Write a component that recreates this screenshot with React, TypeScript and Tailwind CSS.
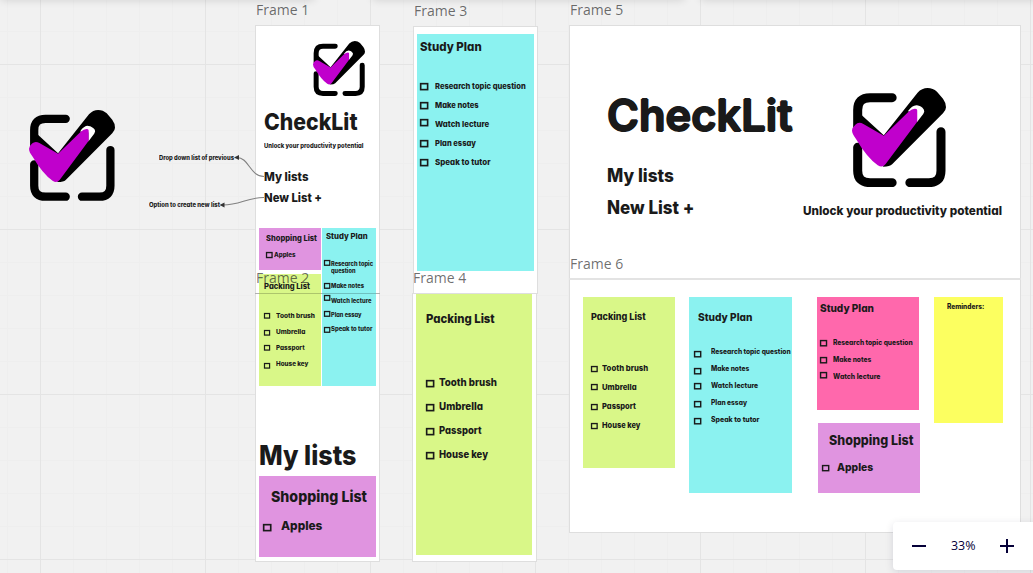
import { useLayoutEffect, useRef, type ReactNode } from "react";

const board =
  "font-['Inter',sans-serif] font-extrabold text-[#1a1a1a] [font-feature-settings:'cv11','ss03']";
const display =
  "font-['Inter',sans-serif] font-semibold text-[#1a1a1a] [font-feature-settings:'cv11','ss03'] [text-shadow:1px_0_#1a1a1a,-1px_0_#1a1a1a,0_1px_#1a1a1a,0_-1px_#1a1a1a]";
const caption = "font-['Open_Sans','Noto_Sans',sans-serif]";

// A line of text, stretched to the width of its text box.
function Text({ children, width, className }: { children: string; width: number; className: string }) {
  const ref = useRef<HTMLSpanElement>(null);
  useLayoutEffect(() => {
    const el = ref.current;
    if (el) {
      el.style.transform = "none";
      el.style.transform = `scaleX(${width / el.getBoundingClientRect().width})`;
    }
  }, [children, width]);
  return (
    <span ref={ref} className={`block w-max shrink-0 origin-left whitespace-nowrap ${className}`}>
      {children}
    </span>
  );
}

function Logo({ className }: { className: string }) {
  return (
    <svg className={`shrink-0 ${className}`} viewBox="36 38 281 298" preserveAspectRatio="none">
      <g fill="none" stroke="#000" strokeWidth="27" strokeLinecap="round">
        <path d="M156 67H90Q53 67 53 104V155" />
        <path d="M53 216V286Q53 322 90 322H156" />
        <path d="M302 169V286Q302 322 266 322H209" />
      </g>
      <path
        d="M53 106L67 121L131 180L232 52Q245 38 262 38Q278 38 290 49L308 70Q317 82 317 96Q317 105 308 114L156 267Q149 274 130 274L68 212L53 180Z"
        fill="#000"
      />
      <path d="M203 108Q216 89 230 90Q243 91 251 103Q254 108 249 116L230 141V112Z" fill="#fff" />
      <path
        d="M46 148Q56 138 70 146L131 181L205 109Q219 97 229 101Q232 104 231 110V139L136 267Q127 279 113 270Q80 246 48 191Q36 176 36 165Q36 157 46 148Z"
        fill="#c000cc"
      />
    </svg>
  );
}

function Checkbox({ className }: { className: string }) {
  return (
    <svg className={`shrink-0 overflow-visible ${className}`} viewBox="0 0 16 14" preserveAspectRatio="none">
      <rect x="1.3" y="1.3" width="13.6" height="11.6" fill="none" stroke="#1a1a1a" strokeWidth="3.2" />
    </svg>
  );
}

type Row = { lines: string[]; widths: number[]; nudge?: string; className?: string };

type NoteProps = {
  className: string;
  title: string;
  titleWidth: number;
  titleClass: string;
  listClass?: string;
  rowClass?: string;
  checkClass?: string;
  textClass?: string;
  rows?: Row[];
};

const row = (text: string, width: number, nudge = ""): Row => ({
  lines: [text],
  widths: [width],
  nudge,
});

function Note(p: NoteProps) {
  return (
    <article className={`flex shrink-0 flex-col items-start ${p.className}`}>
      <Text width={p.titleWidth} className={`${board} ${p.titleClass}`}>
        {p.title}
      </Text>
      {p.rows && (
        <ul className={`flex flex-col ${p.listClass}`}>
          {p.rows.map((r) => (
            <li key={r.lines[0]} className={`flex ${r.className ?? `items-center ${p.rowClass}`}`}>
              <Checkbox className={`${p.checkClass} ${r.nudge ?? ""}`} />
              <div>
                {r.lines.map((line, i) => (
                  <Text key={line} width={r.widths[i]} className={`${board} ${p.textClass}`}>
                    {line}
                  </Text>
                ))}
              </div>
            </li>
          ))}
        </ul>
      )}
    </article>
  );
}

function Frame({
  name,
  className,
  bodyClass,
  children,
}: {
  name: string;
  className: string;
  bodyClass: string;
  children?: ReactNode;
}) {
  return (
    <section className={`absolute flex flex-col ${className}`}>
      <header className="relative z-10 h-[25px] shrink-0 pl-[0.500px]">
        <Text width={53.2} className={`${caption} text-[14.2px] leading-[20px] text-[#1a1a1a]/65`}>
          {name}
        </Text>
      </header>
      <div className={`flex flex-1 border border-[#dedede] bg-white ${bodyClass}`}>{children}</div>
    </section>
  );
}

export default function App() {
  return (
    <main className="relative h-[573px] w-[1033px] overflow-hidden bg-[#f1f1f1] bg-[linear-gradient(to_right,#e4e4e4_1px,transparent_1px),linear-gradient(to_bottom,#e4e4e4_1px,transparent_1px),linear-gradient(to_right,#eeeeee_1px,transparent_1px),linear-gradient(to_bottom,#eeeeee_1px,transparent_1px)] bg-[size:165px_165px,165px_165px,33px_33px,33px_33px] bg-[position:40px_64px,40px_64px,7px_31px,7px_31px]">
      <Frame name="Frame 1" className="left-[255px] top-0 h-[294px] w-[125px]" bodyClass="flex-col pl-2 pt-[15px]">
        <Logo className="ml-[49px] h-[55px] w-[52px]" />
        <Text width={93.5} className={`${board} mt-[13px] text-[23px] leading-[26px]`}>CheckLit</Text>
        <Text width={99.5} className={`${board} mt-[7px] text-[6.2px] leading-[8px]`}>
          Unlock your productivity potential
        </Text>
        <Text width={44.5} className={`${board} mt-[19px] text-[12.4px] leading-[16px]`}>My lists</Text>
        <Text width={58} className={`${board} mt-[5px] text-[12.4px] leading-[16px]`}>New List +</Text>
      </Frame>

      <Frame name="Frame 2" className="left-[255px] top-[268px] h-[294px] w-[125px]" bodyClass="flex-col pl-[3px] pt-[145px]">
        <Text width={97.5} className={`${board} text-[27.500px] leading-[32px]`}>My lists</Text>
        <Note
          className="mt-[5px] h-[80.5px] w-[117px] bg-[#e094e0] pl-[4.300px] pt-[10.500px]"
          title="Shopping List"
          titleWidth={96}
          titleClass="ml-2 text-[15px] leading-[20px]"
          listClass="mt-[11px]"
          rowClass="h-4 gap-[9.400px]"
          checkClass="h-[7.200px] w-[8.300px]"
          textClass="text-[12.4px] leading-[16px]"
          rows={[row("Apples", 41.4, "mt-1")]}
        />
      </Frame>

      <div className="absolute left-[259px] top-[227.5px] flex gap-[0.800px]">
        <div className="flex flex-col gap-1">
          <Note
            className="h-[42.5px] w-[62px] bg-[#e094e0] pl-[6.600px] pt-[5.700px]"
            title="Shopping List"
            titleWidth={51}
            titleClass="text-[7.8px] leading-[10px]"
            listClass="mt-[6.500px]"
            rowClass="h-[10px] gap-[1.600px]"
            checkClass="h-[6px] w-[6.500px]"
            textClass="text-[6.3px] leading-[10px]"
            rows={[row("Apples", 21.6)]}
          />
          <Note
            className="h-[112px] w-[62px] bg-[#d9f788] pl-[5.300px] pt-[6.700px]"
            title="Packing List"
            titleWidth={46}
            titleClass="text-[7.8px] leading-[10px]"
            listClass="mt-[17.300px]"
            rowClass="h-4 gap-[5.700px]"
            checkClass="h-[5.500px] w-[6px]"
            textClass="text-[6.2px] leading-[16px]"
            rows={[
              row("Tooth brush", 39),
              row("Umbrella", 29.3, "mt-[2px]"),
              row("Passport", 28.6),
              row("House key", 32.4, "mt-[4px]"),
            ]}
          />
        </div>
        <Note
          className="h-[158.500px] w-[54px] bg-[#8bf2f0] pl-[2.500px] pt-[4.600px]"
          title="Study Plan"
          titleWidth={41.6}
          titleClass="ml-[1.500px] text-[7.4px] leading-[10px]"
          listClass="mt-[18.200px]"
          rowClass="h-[14.400px] gap-[0.800px]"
          checkClass="h-[5.700px] w-[6.200px]"
          textClass="text-[5.7px] leading-[7px]"
          rows={[
            {
              lines: ["Research topic", "question"],
              widths: [42, 24.5],
              className: "h-[18.300px] items-start gap-[0.800px]",
            },
            row("Make notes", 33),
            row("Watch lecture", 40.4, "-mt-[3.800px]"),
            row("Plan essay", 30.6, "-mt-[0.800px]"),
            row("Speak to tutor", 41.5, "mt-[1.400px]"),
          ]}
        />
      </div>
      <hr className="absolute left-[255px] top-[293px] w-[125px] border-t border-black/20" />

      <Frame name="Frame 3" className="left-[413px] top-px h-[293px] w-[124.500px]" bodyClass="items-start pl-[2.500px] pt-[7px]">
        <Note
          className="h-[237px] w-[117px] bg-[#8bf2f0] pl-[3.600px] pt-[4.600px]"
          title="Study Plan"
          titleWidth={61.7}
          titleClass="text-[12px] leading-[16px]"
          listClass="mt-[21.500px]"
          rowClass="h-[19.200px] gap-[6.400px]"
          checkClass="h-[7.200px] w-[8.200px]"
          textClass="text-[8px] leading-[14px]"
          rows={[
            row("Research topic question", 90.7, "mt-[1px]"),
            row("Make notes", 43.7, "mt-[1px]"),
            row("Watch lecture", 54.2, "-mt-[3px]"),
            row("Plan essay", 41, "mt-[1px]"),
            row("Speak to tutor", 55.5, "mt-[1px]"),
          ]}
        />
      </Frame>

      <Frame name="Frame 4" className="left-[412px] top-[268px] h-[294px] w-[125px]" bodyClass="items-start pl-[3.400px]">
        <Note
          className="h-[261px] w-[115.600px] bg-[#d9f788] pl-[9.600px] pt-[16.600px]"
          title="Packing List"
          titleWidth={68.7}
          titleClass="text-[12px] leading-[16px]"
          listClass="mt-[44.200px]"
          rowClass="h-6 gap-[4.800px]"
          checkClass="h-[7.200px] w-[8.200px]"
          textClass="text-[10.5px] leading-[16px]"
          rows={[
            row("Tooth brush", 58, "mt-[2px]"),
            row("Umbrella", 44, "mt-[1px]"),
            row("Passport", 42.5, "mt-[1px]"),
            row("House key", 49, "mt-[2px]"),
          ]}
        />
      </Frame>

      <Frame name="Frame 5" className="left-[569px] top-0 h-[280px] w-[452px]" bodyClass="items-start pl-[37px]">
        <div className="flex w-[196px] flex-col pt-[63px]">
          <Text width={185.500} className={`${display} text-[43.500px] leading-[52px]`}>CheckLit</Text>
          <Text width={67} className={`${board} mt-[22px] text-[18.2px] leading-[24px]`}>My lists</Text>
          <Text width={87.5} className={`${board} mt-2 text-[18.2px] leading-[24px]`}>New List +</Text>
        </div>
        <div className="flex flex-col pt-[61.700px]">
          <Logo className="ml-[49px] h-[99.300px] w-[94px]" />
          <Text width={199} className={`${board} mt-4 text-[12px] leading-[16px]`}>
            Unlock your productivity potential
          </Text>
        </div>
      </Frame>

      <Frame name="Frame 6" className="left-[569px] top-[254px] h-[279px] w-[452px]" bodyClass="items-start pl-[13.400px] pt-[17px]">
        <Note
          className="mr-[13.800px] h-[171.300px] w-[92px] bg-[#d9f788] pl-[7.600px] pt-[13.800px]"
          title="Packing List"
          titleWidth={54.6}
          titleClass="text-[9.4px] leading-[12px]"
          listClass="mt-[35.800px]"
          rowClass="h-[19px] gap-[4px]"
          checkClass="h-[6px] w-[6.600px]"
          textClass="text-[8.2px] leading-[13px]"
          rows={[
            row("Tooth brush", 46.2, "mt-[2px]"),
            row("Umbrella", 34.6),
            row("Passport", 34, "mt-[1px]"),
            row("House key", 38.4, "mt-[2px]"),
          ]}
        />
        <Note
          className="mr-[25px] h-[196px] w-[102.500px] bg-[#8bf2f0] pl-[5.200px] pt-[15.200px]"
          title="Study Plan"
          titleWidth={54.4}
          titleClass="ml-[3.500px] text-[10.4px] leading-[12px]"
          listClass="mt-[19px]"
          rowClass="h-[17px] gap-[9.100px]"
          checkClass="h-[6.300px] w-[7.200px]"
          textClass="text-[7px] leading-[11px]"
          rows={[
            row("Research topic question", 79.6, "mt-[5px]"),
            row("Make notes", 38.2, "mt-[4px]"),
            row("Watch lecture", 47.2),
            row("Plan essay", 36, "mt-[3px]"),
            row("Speak to tutor", 48.5, "mt-[3px]"),
          ]}
        />
        <div className="mr-[15.200px] flex w-[102.500px] shrink-0 flex-col gap-[13px]">
          <Note
            className="h-[113px] w-[102.500px] bg-[#ff68ac] pl-[3.500px] pt-[6.200px]"
            title="Study Plan"
            titleWidth={54}
            titleClass="text-[10.4px] leading-[12px]"
            listClass="mt-[19px]"
            rowClass="h-[17px] gap-[5.800px]"
            checkClass="h-[6.300px] w-[7px]"
            textClass="text-[7px] leading-[11px]"
            rows={[
              row("Research topic question", 79.6, "mt-[1px]"),
              row("Make notes", 38.2, "mt-[1px]"),
              row("Watch lecture", 47.4, "-mt-[3px]"),
            ]}
          />
          <Note
            className="ml-px h-[70.300px] w-[102.500px] bg-[#e094e0] pl-1 pt-[8.200px]"
            title="Shopping List"
            titleWidth={84.5}
            titleClass="ml-[7px] text-[13.2px] leading-[18px]"
            listClass="mt-[12px]"
            rowClass="h-[14px] gap-[8.500px]"
            checkClass="h-[6.200px] w-[7.200px]"
            textClass="text-[10.8px] leading-[14px]"
            rows={[row("Apples", 36.2)]}
          />
        </div>
        <Note
          className="h-[126px] w-[68.600px] bg-[#fcff60] pl-[12.300px] pt-[4.600px]"
          title="Reminders:"
          titleWidth={37.2}
          titleClass="text-[6.9px] leading-[10px]"
        />
      </Frame>
      <hr className="absolute left-[569px] top-[278px] w-[452px] border-t-2 border-[#e3e3e3]" />

      <Logo className="absolute left-[29px] top-[110px] h-[91px] w-[86px]" />

      <div className="absolute left-[149px] top-[153px] flex flex-col gap-[37px]">
        <Text width={75} className={`${board} ml-[10px] text-[6px] leading-[10px]`}>Drop down list of previous</Text>
        <Text width={71} className={`${board} text-[6px] leading-[10px]`}>Option to create new list</Text>
      </div>
      <svg className="absolute left-[215px] top-[140px] h-[72px] w-[52px]" viewBox="215 140 52 72">
        <g fill="none" stroke="#808080" strokeWidth="1.1">
          <path d="M237 157.500C249 157.500 250 176.500 264 176.500" />
          <path d="M223 205C240 205 247 197.500 264 197.500" />
        </g>
        <path d="M234 157.500L239 155V160ZM219.500 205L224.500 202.500V207.500Z" fill="#333" />
      </svg>

      <div className="absolute -top-2 left-0 flex h-2 w-[1040px] gap-[15px]">
        <div className="mr-[42px] w-[315px] rounded-md shadow-[0_0_8px_rgba(0,0,0,0.14)]" />
        <div className="w-[313px] rounded-md shadow-[0_0_8px_rgba(0,0,0,0.14)]" />
        <div className="flex-1 rounded-md shadow-[0_0_8px_rgba(0,0,0,0.14)]" />
      </div>

      <div className="absolute left-[893px] top-[522px] z-20 flex h-12 w-[148px] items-center rounded bg-white pl-[19px] shadow-[0_2px_8px_rgba(5,0,56,0.12)]">
        <button aria-label="Zoom out">
          <svg className="size-[14px]" viewBox="0 0 14 14">
            <path d="M0 7H14" stroke="#050038" strokeWidth="2" />
          </svg>
        </button>
        <div className="ml-[25px] w-[49px]">
          <Text width={24.5} className={`${caption} text-[12.5px] font-medium leading-[18px] text-[#050038]`}>
            33%
          </Text>
        </div>
        <button aria-label="Zoom in">
          <svg className="size-[14px]" viewBox="0 0 14 14">
            <path d="M0 7H14M7 0V14" stroke="#050038" strokeWidth="2" />
          </svg>
        </button>
      </div>
    </main>
  );
}
